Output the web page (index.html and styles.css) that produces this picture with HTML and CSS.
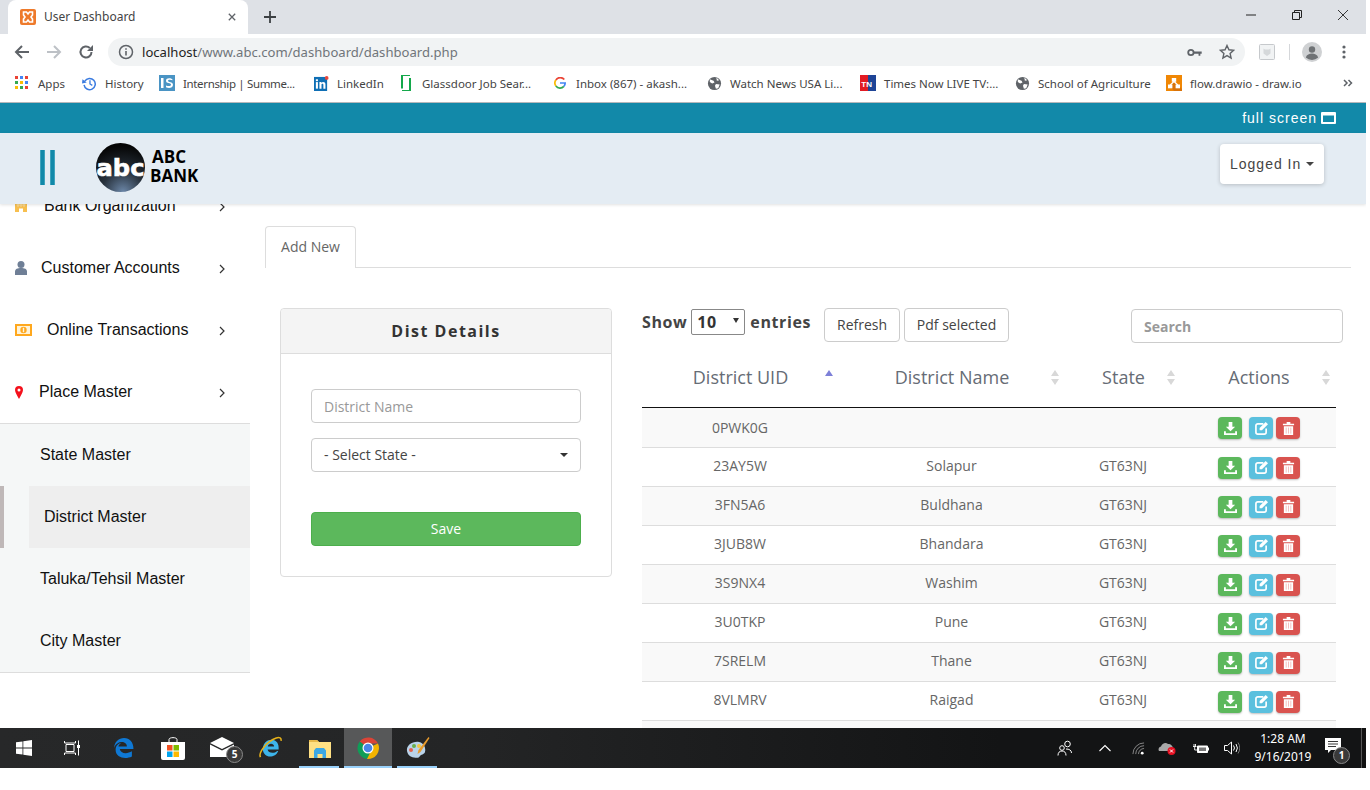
FILE: index.html
```html
<!DOCTYPE html>
<html lang="en">
<head>
<meta charset="utf-8">
<title>User Dashboard</title>
<link rel="stylesheet" href="styles.css">
</head>
<body>
<div class="screen">
  <div class="tabstrip">
    <div class="tab">
      <svg class="favicon" viewBox="0 0 16 16"><rect width="16" height="16" rx="2" fill="#ee7a2b"/><path d="M3.5 3h3L8 5l1.500-2h3v3L11 8l1.500 2v3h-3L8 11l-1.500 2h-3v-3L5 8 3.500 6z" fill="none" stroke="#fff" stroke-width="1.600"/></svg>
      <span class="tab-title">User Dashboard</span>
      <svg class="tab-close" viewBox="0 0 10 10"><path d="M1 1l8 8M9 1l-8 8" stroke="#5f6368" stroke-width="1.600"/></svg>
    </div>
    <svg class="new-tab" viewBox="0 0 12 12"><path d="M6 0v12M0 6h12" stroke="#3c4043" stroke-width="1.800"/></svg>
    <div class="win-controls">
      <svg class="win-min" viewBox="0 0 10 10"><path d="M0 5h10" stroke="#222" stroke-width="1"/></svg>
      <svg class="win-max" viewBox="0 0 10 10"><path d="M.5 2.500h7v7h-7zM2.500 2.500v-2h7v7h-2" fill="none" stroke="#222" stroke-width="1"/></svg>
      <svg class="win-close" viewBox="0 0 10 10"><path d="M0 0l10 10M10 0L0 10" stroke="#222" stroke-width=".9"/></svg>
    </div>
  </div>

  <div class="toolbar">
    <div class="nav-btn"><svg viewBox="0 0 16 16"><path d="M15 8H2M8 2L2 8l6 6" fill="none" stroke="#5f6368" stroke-width="2"/></svg></div>
    <div class="nav-btn"><svg viewBox="0 0 16 16"><path d="M1 8h13M8 2l6 6-6 6" fill="none" stroke="#bdc1c6" stroke-width="2"/></svg></div>
    <div class="nav-btn"><svg viewBox="0 0 16 16"><path d="M13.500 8A5.500 5.500 0 1 1 11.800 4" fill="none" stroke="#5f6368" stroke-width="2"/><path d="M15 1v6H9z" fill="#5f6368"/></svg></div>
    <div class="omnibox">
      <svg class="omni-info" viewBox="0 0 16 16"><circle cx="8" cy="8" r="6.500" fill="none" stroke="#5f6368" stroke-width="1.500"/><path d="M8 7v4.500M8 4.200v1.600" stroke="#5f6368" stroke-width="1.600"/></svg>
      <span class="url"><span class="url-host">localhost</span>/www.abc.com/dashboard/dashboard.php</span>
      <svg class="omni-key" viewBox="0 0 16 10"><circle cx="4" cy="5" r="3" fill="none" stroke="#5f6368" stroke-width="2"/><path d="M7 4h9v2.500h-1.500V8.500h-2V6.500H7z" fill="#5f6368"/></svg>
      <svg class="omni-star" viewBox="0 0 16 16"><path d="M8 1.500l1.950 4.300 4.650.5-3.500 3.100 1 4.600L8 11.600 3.900 14l1-4.600L1.400 6.300l4.650-.5z" fill="none" stroke="#5f6368" stroke-width="1.400"/></svg>
    </div>
    <svg class="ext-icon" viewBox="0 0 16 16"><rect x=".5" y=".5" width="15" height="15" rx="1" fill="#f1f3f4" stroke="#c6c9cc"/><path d="M4.500 4.500l1.500 1h4l1.500-1v5L8 12 4.500 9.500z" fill="#d5d8da"/></svg>
    <div class="tool-sep"></div>
    <svg class="avatar" viewBox="0 0 20 20"><circle cx="10" cy="10" r="10" fill="#cfd1d3"/><circle cx="10" cy="7.500" r="3.200" fill="#6f7275"/><path d="M3.800 15.500c1-3 3.500-4 6.200-4s5.200 1 6.200 4a9 9 0 0 1-12.400 0z" fill="#6f7275"/></svg>
    <svg class="dots" viewBox="0 0 4 14"><circle cx="2" cy="2" r="1.600" fill="#5f6368"/><circle cx="2" cy="7" r="1.600" fill="#5f6368"/><circle cx="2" cy="12" r="1.600" fill="#5f6368"/></svg>
  </div>

  <div class="bookmarks">
    <div class="bm">
      <svg class="bm-apps" viewBox="0 0 14 14"><g><rect width="3" height="3" fill="#ea4335"/><rect x="5" width="3" height="3" fill="#4285f4"/><rect x="10" width="3" height="3" fill="#ea4335"/><rect y="5" width="3" height="3" fill="#34a853"/><rect x="5" y="5" width="3" height="3" fill="#fbbc05"/><rect x="10" y="5" width="3" height="3" fill="#4285f4"/><rect y="10" width="3" height="3" fill="#fbbc05"/><rect x="5" y="10" width="3" height="3" fill="#34a853"/><rect x="10" y="10" width="3" height="3" fill="#ea4335"/></g></svg>
      <span>Apps</span>
    </div>
    <div class="bm">
      <svg class="bm-slim" viewBox="0 0 16 16"><path d="M3 5.500A6 6 0 1 1 2.200 9.500" fill="none" stroke="#3a7be0" stroke-width="1.600"/><path d="M.5 3.500l4.500 3.500L0 8z" fill="#3a7be0"/><path d="M8.500 4.500V8.500l2.500 1.500" fill="none" stroke="#3a7be0" stroke-width="1.400"/></svg>
      <span>History</span>
    </div>
    <div class="bm">
      <svg class="bm-ico" viewBox="0 0 16 16"><rect width="16" height="16" fill="#4a94c4"/><rect x="2" y="3" width="2.500" height="10" fill="#fff"/><path d="M13.500 4.500C12 3 7 2.500 7 5.800c0 3.200 5 1.700 5 4 0 1.700-3 1.500-5 .7v1.800c2.500 1 7 1 7-2.500 0-3.500-5-2-5-4 0-1.500 3-1.300 4.500-.5z" fill="#fff"/></svg>
      <span class="bm-tight">Internship | Summe...</span>
    </div>
    <div class="bm">
      <svg class="bm-slim" viewBox="0 0 16 16"><rect y="1" width="14" height="15" fill="#0f6fb5"/><circle cx="13.500" cy="2" r="2" fill="#e8473b"/><rect x="2" y="6.500" width="2.200" height="7" fill="#fff"/><rect x="2" y="3.500" width="2.200" height="2" fill="#fff"/><path d="M5.800 6.500h2.100v1c1-1.600 4.300-1.500 4.300 1.500v4.500H10V9.500c0-1.500-2-1.500-2 0v4H5.800z" fill="#fff"/></svg>
      <span>LinkedIn</span>
    </div>
    <div class="bm">
      <svg class="bm-glass" viewBox="0 0 12 16"><path d="M10 0H2v13.500M2 16h8V3" fill="none" stroke="#14a84b" stroke-width="2"/></svg>
      <span>Glassdoor Job Sear...</span>
    </div>
    <div class="bm">
      <svg class="bm-g" viewBox="0 0 14 14"><path d="M12 3A6 6 0 0 0 2.200 3.500" fill="none" stroke="#ea4335" stroke-width="2"/><path d="M2.200 3.500a6 6 0 0 0 0 7" fill="none" stroke="#fbbc05" stroke-width="2"/><path d="M2.200 10.500A6 6 0 0 0 11.500 11" fill="none" stroke="#34a853" stroke-width="2"/><path d="M7 7h6c0 1.500-.5 3-1.500 4" fill="none" stroke="#4285f4" stroke-width="2"/></svg>
      <span>Inbox (867) - akash...</span>
    </div>
    <div class="bm">
      <svg class="bm-slim" viewBox="0 0 16 16"><circle cx="8" cy="8" r="7" fill="#5f6368"/><path d="M3 3.500l4 1.500 1 2-2.500 1L3 6.500zM9.500 8.500l4 .5-1.500 4-2.500.5-1-3zM10 1.500l3 3-2.500.5z" fill="#fff"/></svg>
      <span>Watch News USA Li...</span>
    </div>
    <div class="bm">
      <svg class="bm-ico" viewBox="0 0 16 16"><rect width="8" height="16" fill="#e21b23"/><rect x="8" width="8" height="16" fill="#1e4496"/><text x="1.300" y="11.500" class="tn-text">TN</text></svg>
      <span>Times Now LIVE TV:...</span>
    </div>
    <div class="bm">
      <svg class="bm-slim" viewBox="0 0 16 16"><circle cx="8" cy="8" r="7" fill="#5f6368"/><path d="M3 3.500l4 1.500 1 2-2.500 1L3 6.500zM9.500 8.500l4 .5-1.500 4-2.500.5-1-3zM10 1.500l3 3-2.500.5z" fill="#fff"/></svg>
      <span>School of Agriculture</span>
    </div>
    <div class="bm">
      <svg class="bm-ico" viewBox="0 0 16 16"><rect width="16" height="16" fill="#f08705"/><path d="M16 16H8L5 12l3-6 8 8z" fill="#d9730a"/><rect x="5.800" y="3" width="4.400" height="3.800" fill="#fff"/><rect x="2" y="9.500" width="4.400" height="3.800" fill="#fff"/><rect x="9.600" y="9.500" width="4.400" height="3.800" fill="#fff"/><path d="M8 6.500L4.200 10M8 6.500l3.800 3.500" stroke="#fff" stroke-width="1.200"/></svg>
      <span>flow.drawio - draw.io</span>
    </div>
    <svg class="bm-more" viewBox="0 0 10 8"><path d="M1 1l3 3-3 3M5.500 1l3 3-3 3" fill="none" stroke="#5f6368" stroke-width="1.500"/></svg>
  </div>

  <div class="topbar">
    <span class="fs-label">full screen</span>
    <svg class="fs-icon" viewBox="0 0 15 12"><rect width="15" height="12" rx="1" fill="#fff"/><rect x="2" y="3.500" width="11" height="6.500" fill="#1289a9"/></svg>
  </div>

  <header class="header">
    <div class="toggle"><span class="toggle-bar"></span><span class="toggle-bar"></span></div>
    <svg class="logo-mark" viewBox="0 0 48 48">
      <defs><radialGradient id="abcfill" cx=".55" cy="1" r=".95"><stop offset="0" stop-color="#6c87a8"/><stop offset=".45" stop-color="#28323d"/><stop offset="1" stop-color="#050505"/></radialGradient></defs>
      <circle cx="24" cy="24" r="24" fill="url(#abcfill)"/>
      <text x="24" y="32" class="logo-abc" textLength="47" lengthAdjust="spacingAndGlyphs">abc</text>
    </svg>
    <div class="logo-text"><span class="logo-l1">ABC</span><span class="logo-l2">BANK</span></div>
    <div class="logged">Logged In<span class="caret"></span></div>
  </header>

  <div class="body">
    <nav class="sidebar">
      <div class="side-item">
        <svg class="si-bank" viewBox="0 0 12 12"><rect width="12" height="12" fill="#f7bf4f"/><path d="M1.500 2.500h9M1.500 5h9M3 1v6M6 1v6M9 1v6" stroke="#fde3ab" stroke-width=".8"/><rect x="4" y="8.500" width="4" height="3.500" fill="#fff"/></svg>
        <span class="lbl-bank">Bank Organization</span>
        <svg class="chev" viewBox="0 0 6 10"><path d="M1 1l4 4-4 4" fill="none" stroke="#333" stroke-width="1.200"/></svg>
      </div>
      <div class="side-item">
        <svg class="si-user" viewBox="0 0 12 14"><circle cx="6" cy="3.500" r="3.500" fill="#6f7f96"/><path d="M0 14V10.500C0 8 2.500 7 6 7s6 1 6 3.500V14z" fill="#6f7f96"/></svg>
        <span class="lbl-user">Customer Accounts</span>
        <svg class="chev" viewBox="0 0 6 10"><path d="M1 1l4 4-4 4" fill="none" stroke="#333" stroke-width="1.200"/></svg>
      </div>
      <div class="side-item">
        <svg class="si-money" viewBox="0 0 17 12"><rect width="17" height="12" fill="#ffa81e"/><rect x="2" y="2" width="13" height="8" fill="#fff3d8"/><circle cx="8.500" cy="6" r="3.200" fill="#ffa81e"/><rect x="7.800" y="3.800" width="1.400" height="4.400" fill="#fff3d8"/></svg>
        <span class="lbl-money">Online Transactions</span>
        <svg class="chev" viewBox="0 0 6 10"><path d="M1 1l4 4-4 4" fill="none" stroke="#333" stroke-width="1.200"/></svg>
      </div>
      <div class="side-item">
        <svg class="si-pin" viewBox="0 0 8 13"><path fill-rule="evenodd" d="M4 0a4 4 0 0 1 4 4c0 2.500-2.500 6-4 9-1.500-3-4-6.500-4-9a4 4 0 0 1 4-4zm0 2.500a1.500 1.500 0 1 0 0 3 1.500 1.500 0 0 0 0-3z" fill="#f4111c"/></svg>
        <span class="lbl-pin">Place Master</span>
        <svg class="chev" viewBox="0 0 6 10"><path d="M1 1l4 4-4 4" fill="none" stroke="#333" stroke-width="1.200"/></svg>
      </div>
      <div class="submenu">
        <div class="sub-item">State Master</div>
        <div class="sub-row">
          <span class="sub-marker"></span>
          <div class="sub-active">District Master</div>
        </div>
        <div class="sub-item">Taluka/Tehsil Master</div>
        <div class="sub-item">City Master</div>
      </div>
    </nav>

    <main class="main">
      <div class="tabs"><div class="tab-add">Add New</div></div>
      <div class="columns">
        <section class="panel">
          <h2 class="panel-head">Dist Details</h2>
          <div class="panel-body">
            <input class="field" type="text" placeholder="District Name">
            <div class="field select-field"><span>- Select State -</span><span class="caret caret-dark"></span></div>
            <button class="save" type="button">Save</button>
          </div>
        </section>

        <section class="list">
          <div class="list-tools">
            <span class="show-text">Show</span>
            <div class="len-select"><span>10</span><span class="len-arrow"></span></div>
            <span class="show-text">entries</span>
            <button class="plain-btn refresh" type="button">Refresh</button>
            <button class="plain-btn pdf" type="button">Pdf selected</button>
            <input class="search" type="text" placeholder="Search">
          </div>
          <table class="grid">
            <colgroup><col class="c1"><col class="c2"><col class="c3"><col class="c4"></colgroup>
            <thead>
              <tr>
                <th>District UID<span class="sort sort-asc"></span></th>
                <th>District Name<span class="sort"></span></th>
                <th>State<span class="sort"></span></th>
                <th>Actions<span class="sort"></span></th>
              </tr>
            </thead>
            <tbody>
              <tr><td>0PWK0G</td><td></td><td></td><td class="acts"><span class="act act-g"><svg viewBox="0 0 14 14"><path d="M5 0h4v5h3L7 10 2 5h3zM0 10h2v2h10v-2h2v4H0z" fill="#fff"/></svg></span><span class="act act-b"><svg viewBox="0 0 14 14"><path d="M9 2H3a2 2 0 0 0-2 2v7a2 2 0 0 0 2 2h7a2 2 0 0 0 2-2V7" fill="none" stroke="#fff" stroke-width="1.800"/><path d="M11.500 0L14 2.500 7.500 9H5V6.500z" fill="#fff"/></svg></span><span class="act act-r"><svg viewBox="0 0 12 14"><path d="M0 2h4V0h4v2h4v1.500H0zM1 4.500h10V14H1z" fill="#fff"/><path d="M3.500 6v6.500M6 6v6.500M8.500 6v6.500" stroke="#f0b5b3" stroke-width=".9"/></svg></span></td></tr>
              <tr><td>23AY5W</td><td>Solapur</td><td>GT63NJ</td><td class="acts"><span class="act act-g"><svg viewBox="0 0 14 14"><path d="M5 0h4v5h3L7 10 2 5h3zM0 10h2v2h10v-2h2v4H0z" fill="#fff"/></svg></span><span class="act act-b"><svg viewBox="0 0 14 14"><path d="M9 2H3a2 2 0 0 0-2 2v7a2 2 0 0 0 2 2h7a2 2 0 0 0 2-2V7" fill="none" stroke="#fff" stroke-width="1.800"/><path d="M11.500 0L14 2.500 7.500 9H5V6.500z" fill="#fff"/></svg></span><span class="act act-r"><svg viewBox="0 0 12 14"><path d="M0 2h4V0h4v2h4v1.500H0zM1 4.500h10V14H1z" fill="#fff"/><path d="M3.500 6v6.500M6 6v6.500M8.500 6v6.500" stroke="#f0b5b3" stroke-width=".9"/></svg></span></td></tr>
              <tr><td>3FN5A6</td><td>Buldhana</td><td>GT63NJ</td><td class="acts"><span class="act act-g"><svg viewBox="0 0 14 14"><path d="M5 0h4v5h3L7 10 2 5h3zM0 10h2v2h10v-2h2v4H0z" fill="#fff"/></svg></span><span class="act act-b"><svg viewBox="0 0 14 14"><path d="M9 2H3a2 2 0 0 0-2 2v7a2 2 0 0 0 2 2h7a2 2 0 0 0 2-2V7" fill="none" stroke="#fff" stroke-width="1.800"/><path d="M11.500 0L14 2.500 7.500 9H5V6.500z" fill="#fff"/></svg></span><span class="act act-r"><svg viewBox="0 0 12 14"><path d="M0 2h4V0h4v2h4v1.500H0zM1 4.500h10V14H1z" fill="#fff"/><path d="M3.500 6v6.500M6 6v6.500M8.500 6v6.500" stroke="#f0b5b3" stroke-width=".9"/></svg></span></td></tr>
              <tr><td>3JUB8W</td><td>Bhandara</td><td>GT63NJ</td><td class="acts"><span class="act act-g"><svg viewBox="0 0 14 14"><path d="M5 0h4v5h3L7 10 2 5h3zM0 10h2v2h10v-2h2v4H0z" fill="#fff"/></svg></span><span class="act act-b"><svg viewBox="0 0 14 14"><path d="M9 2H3a2 2 0 0 0-2 2v7a2 2 0 0 0 2 2h7a2 2 0 0 0 2-2V7" fill="none" stroke="#fff" stroke-width="1.800"/><path d="M11.500 0L14 2.500 7.500 9H5V6.500z" fill="#fff"/></svg></span><span class="act act-r"><svg viewBox="0 0 12 14"><path d="M0 2h4V0h4v2h4v1.500H0zM1 4.500h10V14H1z" fill="#fff"/><path d="M3.500 6v6.500M6 6v6.500M8.500 6v6.500" stroke="#f0b5b3" stroke-width=".9"/></svg></span></td></tr>
              <tr><td>3S9NX4</td><td>Washim</td><td>GT63NJ</td><td class="acts"><span class="act act-g"><svg viewBox="0 0 14 14"><path d="M5 0h4v5h3L7 10 2 5h3zM0 10h2v2h10v-2h2v4H0z" fill="#fff"/></svg></span><span class="act act-b"><svg viewBox="0 0 14 14"><path d="M9 2H3a2 2 0 0 0-2 2v7a2 2 0 0 0 2 2h7a2 2 0 0 0 2-2V7" fill="none" stroke="#fff" stroke-width="1.800"/><path d="M11.500 0L14 2.500 7.500 9H5V6.500z" fill="#fff"/></svg></span><span class="act act-r"><svg viewBox="0 0 12 14"><path d="M0 2h4V0h4v2h4v1.500H0zM1 4.500h10V14H1z" fill="#fff"/><path d="M3.500 6v6.500M6 6v6.500M8.500 6v6.500" stroke="#f0b5b3" stroke-width=".9"/></svg></span></td></tr>
              <tr><td>3U0TKP</td><td>Pune</td><td>GT63NJ</td><td class="acts"><span class="act act-g"><svg viewBox="0 0 14 14"><path d="M5 0h4v5h3L7 10 2 5h3zM0 10h2v2h10v-2h2v4H0z" fill="#fff"/></svg></span><span class="act act-b"><svg viewBox="0 0 14 14"><path d="M9 2H3a2 2 0 0 0-2 2v7a2 2 0 0 0 2 2h7a2 2 0 0 0 2-2V7" fill="none" stroke="#fff" stroke-width="1.800"/><path d="M11.500 0L14 2.500 7.500 9H5V6.500z" fill="#fff"/></svg></span><span class="act act-r"><svg viewBox="0 0 12 14"><path d="M0 2h4V0h4v2h4v1.500H0zM1 4.500h10V14H1z" fill="#fff"/><path d="M3.500 6v6.500M6 6v6.500M8.500 6v6.500" stroke="#f0b5b3" stroke-width=".9"/></svg></span></td></tr>
              <tr><td>7SRELM</td><td>Thane</td><td>GT63NJ</td><td class="acts"><span class="act act-g"><svg viewBox="0 0 14 14"><path d="M5 0h4v5h3L7 10 2 5h3zM0 10h2v2h10v-2h2v4H0z" fill="#fff"/></svg></span><span class="act act-b"><svg viewBox="0 0 14 14"><path d="M9 2H3a2 2 0 0 0-2 2v7a2 2 0 0 0 2 2h7a2 2 0 0 0 2-2V7" fill="none" stroke="#fff" stroke-width="1.800"/><path d="M11.500 0L14 2.500 7.500 9H5V6.500z" fill="#fff"/></svg></span><span class="act act-r"><svg viewBox="0 0 12 14"><path d="M0 2h4V0h4v2h4v1.500H0zM1 4.500h10V14H1z" fill="#fff"/><path d="M3.500 6v6.500M6 6v6.500M8.500 6v6.500" stroke="#f0b5b3" stroke-width=".9"/></svg></span></td></tr>
              <tr><td>8VLMRV</td><td>Raigad</td><td>GT63NJ</td><td class="acts"><span class="act act-g"><svg viewBox="0 0 14 14"><path d="M5 0h4v5h3L7 10 2 5h3zM0 10h2v2h10v-2h2v4H0z" fill="#fff"/></svg></span><span class="act act-b"><svg viewBox="0 0 14 14"><path d="M9 2H3a2 2 0 0 0-2 2v7a2 2 0 0 0 2 2h7a2 2 0 0 0 2-2V7" fill="none" stroke="#fff" stroke-width="1.800"/><path d="M11.500 0L14 2.500 7.500 9H5V6.500z" fill="#fff"/></svg></span><span class="act act-r"><svg viewBox="0 0 12 14"><path d="M0 2h4V0h4v2h4v1.500H0zM1 4.500h10V14H1z" fill="#fff"/><path d="M3.500 6v6.500M6 6v6.500M8.500 6v6.500" stroke="#f0b5b3" stroke-width=".9"/></svg></span></td></tr>
              <tr><td></td><td></td><td></td><td></td></tr>
            </tbody>
          </table>
        </section>
      </div>
    </main>
  </div>

  <footer class="taskbar">
    <div class="tb-start"><svg class="tb-win" viewBox="0 0 16 16"><path d="M0 2.300l6.500-.9v6.200H0zM7.300 1.300L16 0v7.600H7.300zM0 8.400h6.500v6.200L0 13.700zM7.300 8.400H16V16l-8.700-1.200z" fill="#fff"/></svg></div>
    <div class="tb-view"><svg class="tb-tv" viewBox="0 0 16 16"><path d="M2 4.500h8v7H2zM.5 1v2h11V1M.5 15v-2h11v2" fill="none" stroke="#fff" stroke-width="1"/><path d="M14.500 .5v15" stroke="#fff" stroke-width="1"/><rect x="13" y="5" width="3" height="3" fill="#fff"/></svg></div>
    <div class="tb-app"><svg class="tb-edge" viewBox="0 0 20 20"><path d="M1 10C1.500 4 5.500.5 10.500.5c5.500 0 9 4 9 10.500H6.500c.5 4.500 7 5 11.500 2.200v4.800c-6 3-16 1.500-15.500-7 .3-3.500 3-5.500 5.500-6-1.500 1-2.500 2-2.800 3.500h8c0-5.500-9.500-6-12.200 1.500z" fill="#0f78d4"/></svg></div>
    <div class="tb-app"><svg class="tb-store" viewBox="0 0 24 24"><path d="M8 6V3.500C8 1 16 1 16 3.500V6" fill="none" stroke="#fff" stroke-width="1"/><path d="M0 6h24v16a2 2 0 0 1-2 2H2a2 2 0 0 1-2-2z" fill="#fff"/><rect x="6" y="9" width="5.500" height="5.500" fill="#f25022"/><rect x="12.500" y="9" width="5.500" height="5.500" fill="#7fba00"/><rect x="6" y="15.500" width="5.500" height="5.500" fill="#00a4ef"/><rect x="12.500" y="15.500" width="5.500" height="5.500" fill="#ffb900"/></svg></div>
    <div class="tb-app tb-mailslot"><svg class="tb-mail" viewBox="0 0 24 20"><path d="M0 6L12 0l12 6-12 6z" fill="#fff"/><path d="M0 7.500l12 6 12-6V20H0z" fill="#fff"/></svg><span class="tb-badge tb-badge-mail">5</span></div>
    <div class="tb-app"><svg class="tb-ie" viewBox="0 0 24 24"><path d="M4 12.500C4.500 7 8.500 3.500 13 3.500c5.500 0 8 4.500 7.500 10H9c.5 4 7 4.500 10 1.500h1C18 21 10 22.500 6.500 19 4 16.500 4 14 4 12.500zM9.200 10.500h6.600C15.500 6.500 9.700 6.500 9.200 10.500z" fill="#3db4ea"/><path d="M1.500 21.500C-1 17 8 5 18 1.500c3.500-1 5.500 0 5 3" fill="none" stroke="#e7b21a" stroke-width="1.600"/></svg></div>
    <div class="tb-app tb-run"><svg class="tb-folder" viewBox="0 0 22 20"><path d="M0 2h8l2 2h12v16H0z" fill="#ffe083"/><path d="M0 2h8l2 2H0z" fill="#e9b949"/><path d="M5 20v-7.500L7 10h8l2 2.500V20h-3.500v-4h-5v4z" fill="#3ba7e5"/></svg></div>
    <div class="tb-app tb-run tb-active"><svg class="tb-chrome" viewBox="0 0 24 24"><path d="M12 12L3.700 5.500A11 11 0 0 1 22 7.500H12z" fill="#db4437"/><path d="M12 12L3.700 5.500A11 11 0 0 0 11 23l4-8z" fill="#0f9d58"/><path d="M12 12l10-4.500A11 11 0 0 1 11 23l4-8z" fill="#f4b400"/><circle cx="12" cy="12" r="5.500" fill="#fff"/><circle cx="12" cy="12" r="4.300" fill="#4a86e8"/></svg></div>
    <div class="tb-app tb-run"><svg class="tb-paint" viewBox="0 0 24 24"><path d="M1 15C0 9 7 5 13 6c5 1 7 6 6 10-1 3-4 2-5 4s-3 2-6 1.500C4 21 2 19 1 15z" fill="#b9d3ea"/><circle cx="5" cy="14" r="2" fill="#e3624d"/><circle cx="8" cy="10" r="2" fill="#6ab04c"/><circle cx="13" cy="10" r="2" fill="#f2c744"/><path d="M22.500 1l1 1-9 14-3 2 1-4z" fill="#e89b2c"/></svg></div>

    <div class="tray">
      <div class="tr-people"><svg class="tr-i16" viewBox="0 0 16 16"><circle cx="10.500" cy="4" r="2.800" fill="none" stroke="#fff"/><circle cx="5" cy="8" r="2.300" fill="none" stroke="#fff"/><path d="M1 15.500c0-3 1.500-4.500 4-4.500s4 1.500 4 4.500M9 9c3 0 5.500 1 5.500 4" fill="none" stroke="#fff"/></svg></div>
      <div class="tr-chev"><svg class="tr-i12" viewBox="0 0 12 8"><path d="M.5 7L6 1.500 11.500 7" fill="none" stroke="#fff" stroke-width="1.100"/></svg></div>
      <div class="tr-wifi"><svg class="tr-i12b" viewBox="0 0 14 14"><path d="M1 13A12 12 0 0 1 13 1M4 13a9 9 0 0 1 9-9M7 13a6 6 0 0 1 6-6" fill="none" stroke="#8c8c8c" stroke-width="1"/><circle cx="11" cy="12" r="1.500" fill="#fff"/></svg></div>
      <div class="tr-cloud"><svg class="tr-i18" viewBox="0 0 18 14"><path d="M1 10a3 3 0 0 1 2-4.500C4 2 8 1 10 3c3 0 5 2 5 5v2z" fill="#a8a8a8"/><circle cx="13.500" cy="10" r="4" fill="#e81123"/><path d="M12 8.500l3 3M15 8.500l-3 3" stroke="#fff" stroke-width="1"/></svg></div>
      <div class="tr-batt"><svg class="tr-i16b" viewBox="0 0 16 11"><path d="M4.500 3h10v6.500h-10z" fill="#fff" stroke="#fff"/><rect x="6" y="4.500" width="7" height="3.500" fill="#777"/><rect x="15" y="4.500" width="1" height="3" fill="#fff"/><path d="M0 3.500h3.500M1 1v2.500M2.500 1v2.500M1.700 3.500V7H4.500" stroke="#fff" fill="none" stroke-width=".9"/></svg></div>
      <div class="tr-vol"><svg class="tr-i16" viewBox="0 0 16 14"><path d="M.5 4.500h3L7.500 1v12l-4-3.500h-3z" fill="none" stroke="#fff"/><path d="M9.500 4.500a4 4 0 0 1 0 5" fill="none" stroke="#fff"/><path d="M12 3a7 7 0 0 1 0 8" fill="none" stroke="#fff"/><path d="M14 1.500a10 10 0 0 1 0 11" fill="none" stroke="#777"/></svg></div>
      <div class="tr-clock"><span>1:28 AM</span><span>9/16/2019</span></div>
      <div class="tr-notif"><svg class="tr-i16c" viewBox="0 0 16 16"><path d="M0 0h16v12H6l-3 3v-3H0z" fill="#fff"/><path d="M3 3.500h10M3 6h10M3 8.500h8" stroke="#222" stroke-width=".9"/></svg><span class="tb-badge tb-badge-note">1</span></div>
      <div class="tr-edge"></div>
    </div>
  </footer>
</div>
</body>
</html>
```

FILE: styles.css
```css
* { box-sizing: border-box; }
html, body { margin: 0; height: 100%; background: #fff; overflow: hidden; }
body { font-family: "Open Sans", sans-serif; }
svg { display: block; flex: none; }

.screen { width: 1366px; height: 768px; display: flex; flex-direction: column; overflow: hidden; }

/* browser chrome */
.tabstrip { height: 34px; flex: none; background: #dee1e6; display: flex; align-items: center; position: relative; padding-left: 8px; }
.tab { width: 240px; height: 34px; background: #fff; border-radius: 8px 8px 0 0; display: flex; align-items: center; padding-left: 12px; }
.favicon { width: 16px; height: 16px; }
.tab-title { margin-left: 8px; margin-top: -2px; font: 12px "Noto Sans", sans-serif; color: #444; width: 184px; }
.tab-close { width: 8px; height: 8px; }
.new-tab { width: 12px; height: 12px; margin-left: 16px; }
.win-controls { margin-left: auto; display: flex; align-items: center; height: 28px; margin-top: -5px; padding-right: 18px; }
.win-min { width: 10px; height: 10px; }
.win-max { width: 10px; height: 10px; margin-left: 36px; }
.win-close { width: 10px; height: 10px; margin-left: 36px; }

.toolbar { height: 32px; flex: none; background: #fff; display: flex; align-items: flex-end; padding-left: 6px; }
.nav-btn { width: 32px; height: 28px; display: flex; align-items: center; justify-content: center; }
.nav-btn svg { width: 16px; height: 16px; }
.omnibox { width: 1137px; height: 28px; margin-left: 6px; background: #f1f3f4; border-radius: 14px; display: flex; align-items: center; padding-left: 10px; }
.omni-info { width: 16px; height: 16px; }
.url { margin-left: 8px; font: 13.100px "Noto Sans", sans-serif; color: #70757a; width: 1045px; white-space: nowrap; }
.url-host { color: #222; }
.omni-key { width: 15px; height: 9px; }
.omni-star { width: 16px; height: 16px; margin-left: 17px; }
.ext-icon { width: 16px; height: 16px; margin-left: 14px; margin-bottom: 6px; }
.tool-sep { width: 1px; height: 16px; background: #d5d7da; margin-left: 14px; margin-bottom: 6px; }
.avatar { width: 20px; height: 20px; margin-left: 12px; margin-bottom: 4px; }
.dots { width: 4px; height: 14px; margin-left: 20px; margin-bottom: 7px; }

.bookmarks { height: 37px; flex: none; background: #fff; border-bottom: 1px solid #b5b8bb; padding: 0 0 2px 15px; display: grid; grid-template-columns: 67px 77px 155px 86px 154px 153px 153px 155px 151px 177px 10px; align-items: center; font: 11.500px "Noto Sans", sans-serif; color: #444; }
.bm { display: flex; align-items: center; gap: 8px; white-space: nowrap; }
.bm-tight { letter-spacing: -.35px; }
.bm-apps { width: 14px; height: 14px; margin-right: 1px; }
.bm-ico { width: 16px; height: 16px; }
.bm-slim { width: 15px; height: 15px; }
.bm-glass { width: 12px; height: 16px; margin-right: 2px; }
.bm-g { width: 12px; height: 12px; margin-right: 2px; }
.tn-text { font: bold 8px "Liberation Sans", sans-serif; fill: #fff; }
.bm-more { width: 10px; height: 8px; }

/* page header */
.topbar { height: 30px; flex: none; background: #1289a9; display: flex; align-items: center; justify-content: flex-end; padding-right: 30px; }
.fs-label { font: 14px "Liberation Sans", sans-serif; letter-spacing: 1px; color: #fff; }
.fs-icon { width: 15px; height: 12px; margin-left: 4px; }

.header { height: 71px; flex: none; background: #e4ecf3; display: flex; align-items: center; padding: 0 42px 3px 40px; box-shadow: 0 1px 3px rgba(0,0,0,.12); position: relative; z-index: 2; }
.toggle { display: flex; gap: 5px; height: 35px; }
.toggle-bar { width: 5px; height: 35px; background: #1289a9; border-left: 1px solid #3fa3bd; border-right: 1px solid #3fa3bd; }
.logo-mark { width: 49px; height: 49px; margin-left: 41px; }
.logo-abc { font: bold 23px "DejaVu Sans", sans-serif; fill: #fff; stroke: #fff; stroke-width: .6px; text-anchor: middle; }
.logo-text { display: flex; flex-direction: column; margin-left: 5px; margin-top: -2px; font: 700 17px/19px "Open Sans", sans-serif; color: #000; }
.logo-l1 { margin-left: 2px; }
.logged { margin-left: auto; margin-bottom: 6px; width: 104px; height: 40px; background: #fff; border-radius: 4px; box-shadow: 0 1px 4px rgba(0,0,0,.2); display: flex; align-items: center; padding-left: 10px; font: 14px "Liberation Sans", sans-serif; letter-spacing: 1px; color: #444; }
.caret { width: 0; height: 0; border-left: 4px solid transparent; border-right: 4px solid transparent; border-top: 4px solid #444; margin-left: 5px; }

/* layout */
.body { flex: 1; min-height: 0; display: flex; background: #fff; }
.sidebar { width: 250px; flex: none; overflow: hidden; font: 16px "Liberation Sans", sans-serif; color: #111; }
.side-item { height: 62px; display: flex; align-items: center; padding-left: 15px; }
.side-item:first-child { margin-top: -29px; }
.si-bank { width: 12px; height: 12px; margin-right: 17px; }
.si-user { width: 12px; height: 14px; margin-right: 14px; }
.si-money { width: 17px; height: 12px; margin-right: 15px; }
.si-pin { width: 8px; height: 13px; margin-right: 16px; }
.chev { width: 6px; height: 10px; margin-left: auto; margin-right: 25px; margin-top: 2px; }
.submenu { background: #f5f7f7; border-top: 1px solid #ddd; border-bottom: 1px solid #ddd; }
.sub-item { height: 62px; display: flex; align-items: center; padding-left: 40px; }
.sub-row { height: 62px; display: flex; }
.sub-marker { width: 4px; background: #bfb8b8; }
.sub-active { margin-left: 25px; flex: 1; background: #eee; display: flex; align-items: center; padding-left: 15px; }

.main { flex: 1; min-width: 0; overflow: hidden; padding: 22px 15px 0; }
.tabs { height: 42px; border-bottom: 1px solid #ddd; }
.tab-add { width: 91px; height: 42px; background: #fff; border: 1px solid #ddd; border-bottom: 0; border-radius: 4px 4px 0 0; padding-bottom: 2px; display: flex; align-items: center; justify-content: center; font-size: 14px; color: #666; }
.columns { display: flex; margin-top: 40px; padding-left: 15px; gap: 30px; align-items: flex-start; }

.panel { width: 332px; flex: none; height: 269px; border: 1px solid #ddd; border-radius: 4px; }
.panel-head { margin: 0; height: 45px; background: #f4f4f4; border-bottom: 1px solid #ddd; border-radius: 4px 4px 0 0; display: flex; align-items: center; justify-content: center; font-size: 16px; font-weight: 700; letter-spacing: 1.500px; color: #333; }
.panel-body { padding: 35px 30px 0; display: flex; flex-direction: column; }
.field { width: 270px; height: 34px; border: 1px solid #ccc; border-radius: 4px; background: #fff; padding: 0 12px; font: 14px "Open Sans", sans-serif; color: #444; outline: 0; display: block; }
.field::placeholder { color: #999; opacity: 1; }
.select-field { margin-top: 15px; padding-bottom: 2px; display: flex; align-items: center; justify-content: space-between; }
.caret-dark { border-top-color: #333; margin-top: 2px; }
.save { margin-top: 40px; width: 270px; height: 34px; padding: 0 0 2px; border: 1px solid #4cae4c; border-radius: 4px; background: #5cb85c; color: #fff; font: 14px "Open Sans", sans-serif; }

.list { width: 701px; flex: none; }
.list-tools { display: flex; align-items: center; height: 35px; }
.show-text { font-size: 16px; font-weight: 700; letter-spacing: .6px; color: #444; margin-top: -8px; }
.len-select { width: 54px; height: 26px; border: 1px solid #888; border-radius: 2px; margin: -7px 5px 0 4px; display: flex; align-items: center; justify-content: space-between; padding: 0 5px 0 5px; font-size: 16px; font-weight: 700; letter-spacing: .6px; color: #333; }
.len-arrow { width: 0; height: 0; border-left: 3.500px solid transparent; border-right: 3.500px solid transparent; border-top: 5px solid #333; margin-top: -4px; }
.plain-btn { height: 34px; background: #fff; border: 1px solid #ccc; border-radius: 4px; font: 14px "Open Sans", sans-serif; color: #444; padding: 0 0 2px; margin-top: -1px; }
.refresh { width: 76px; margin-left: 13px; }
.pdf { width: 105px; margin-left: 4px; }
.search { width: 212px; height: 34px; margin-left: auto; margin-top: 1px; border: 1px solid #ccc; border-radius: 4px; padding: 0 12px; font: 700 14px "Open Sans", sans-serif; outline: 0; }
.search::placeholder { color: #999; opacity: 1; }

.grid { width: 694px; table-layout: fixed; border-collapse: separate; border-spacing: 0; margin-top: 6px; }
.c1 { width: 196px; }
.c2 { width: 227px; }
.c3 { width: 116px; }
.c4 { width: 155px; }
.grid th { height: 59px; padding: 0 0 2px 1px; position: relative; border-bottom: 1px solid #111; font-size: 18px; font-weight: 400; color: #666c75; text-align: center; vertical-align: middle; }
.sort { position: absolute; right: 5px; top: 21px; width: 9px; height: 15px; }
.sort::before, .sort::after { content: ""; position: absolute; left: 0; width: 0; height: 0; border-left: 4.500px solid transparent; border-right: 4.500px solid transparent; }
.sort::before { top: 0; border-bottom: 6px solid #d8d8d8; }
.sort::after { bottom: 0; border-top: 6px solid #d8d8d8; }
.sort-asc { right: 4px; top: 21px; }
.sort-asc::before { border-bottom-color: #7d80d8; }
.sort-asc::after { display: none; }
.grid td { height: 39px; padding: 0 0 4px; border-bottom: 1px solid #ddd; font-size: 14px; color: #666; text-align: center; vertical-align: middle; }
.grid tbody tr:first-child td { height: 40px; padding-bottom: 1px; }
.grid tbody tr:nth-child(odd) td { background: #f9f9f9; }
.grid td.acts, .grid tbody tr:first-child td.acts { text-align: left; padding: 0 0 0 37px; font-size: 0; }
.act { display: inline-flex; width: 24px; height: 22px; align-items: center; justify-content: center; border-radius: 4px; margin-top: 1px; vertical-align: middle; box-shadow: 0 1px 2px rgba(0,0,0,.25); }
.act svg { width: 13px; height: 13px; }
.act-g { background: #5cb85c; margin-right: 7px; }
.act-b { background: #5bc0de; margin-right: 3px; }
.act-r { background: #d9534f; }

/* windows taskbar */
.taskbar { height: 40px; flex: none; background: #1f2021; display: flex; position: relative; z-index: 3; background-image: linear-gradient(90deg, #272829 0, #242526 460px, #131415 1000px); }
.tb-start { width: 48px; display: flex; align-items: center; justify-content: center; }
.tb-view { width: 48px; margin-right: 3px; display: flex; align-items: center; justify-content: center; }
.tb-win { width: 16px; height: 16px; }
.tb-tv { width: 16px; height: 16px; }
.tb-app { width: 49px; display: flex; align-items: center; justify-content: center; position: relative; }
.tb-edge { width: 21px; height: 22px; }
.tb-store { width: 24px; height: 24px; }
.tb-mail { width: 24px; height: 20px; }
.tb-mailslot { padding-bottom: 2px; }
.tb-ie { width: 23px; height: 24px; }
.tb-folder { width: 22px; height: 20px; }
.tb-chrome { width: 24px; height: 24px; }
.tb-paint { width: 24px; height: 24px; }
.tb-run::after { content: ""; position: absolute; left: 4px; right: 5px; bottom: 0; height: 2px; background: #99d1fb; }
.tb-active { background: #575859; width: 48px; margin-right: 1px; }
.tb-active::after { left: 0; right: 0; }
.tb-badge { position: absolute; width: 17px; height: 17px; border-radius: 50%; background: #3a3a3a; border: 1px solid #8a8a8a; color: #fff; font: bold 10px/15px "Open Sans", sans-serif; text-align: center; }
.tb-badge-mail { left: 29px; top: 18px; }
.tb-badge-note { left: 11px; top: 19px; }

.tray { margin-left: auto; display: flex; height: 40px; color: #fff; }
.tray > div { display: flex; align-items: center; justify-content: center; position: relative; }
.tr-people { width: 40px; }
.tr-chev { width: 40px; }
.tr-wifi { width: 27px; }
.tr-cloud { width: 30px; }
.tr-batt { width: 38px; }
.tr-vol { width: 24px; }
.tr-i16 { width: 16px; height: 16px; }
.tr-i12 { width: 12px; height: 8px; }
.tr-i12b { width: 13px; height: 13px; }
.tr-i18 { width: 18px; height: 14px; }
.tr-i16b { width: 16px; height: 11px; }
.tr-i16c { width: 16px; height: 16px; margin-top: -4px; }
.tray > .tr-clock { width: 78px; flex-direction: column; font: 12px/18px "Noto Sans", sans-serif; }
.tr-notif { width: 39px; padding-right: 17px; }
.tray > .tr-edge { width: 5px; border-left: 1px solid #555; background: #111; }
```
